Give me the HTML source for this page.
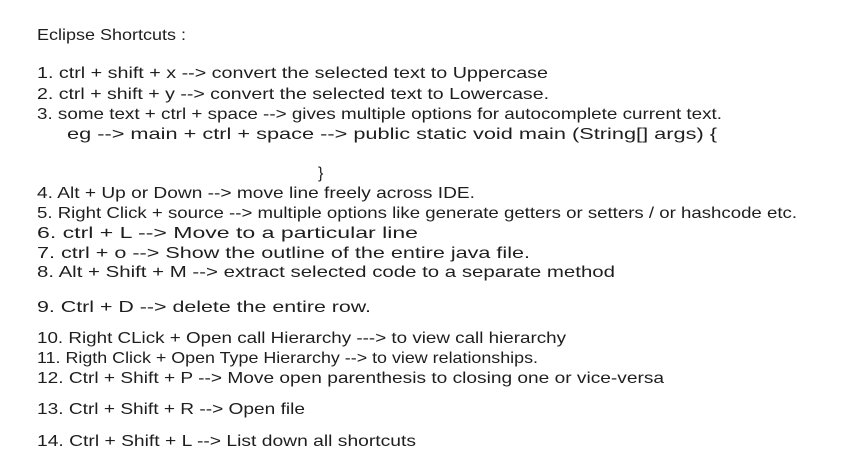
<!DOCTYPE html>
<html><head><meta charset="utf-8"><style>
html,body{margin:0;padding:0;background:#fff;width:867px;height:466px;overflow:hidden}
svg text{font-family:"Liberation Sans",sans-serif;font-size:16px;fill:#1e1e1e}
</style></head><body>
<svg width="867" height="466" xmlns="http://www.w3.org/2000/svg">
<text x="37" y="40" textLength="149" lengthAdjust="spacingAndGlyphs">Eclipse Shortcuts :</text>
<text x="37" y="78" textLength="511" lengthAdjust="spacingAndGlyphs">1. ctrl + shift + x  --&gt; convert the selected text to Uppercase</text>
<text x="37" y="99" textLength="512" lengthAdjust="spacingAndGlyphs">2. ctrl + shift + y --&gt; convert the selected text to Lowercase.</text>
<text x="37" y="119" textLength="685" lengthAdjust="spacingAndGlyphs">3. some text + ctrl + space --&gt; gives multiple options for autocomplete current text.</text>
<text x="67" y="139" textLength="650" lengthAdjust="spacingAndGlyphs">eg --&gt; main + ctrl + space --&gt; public static void main (String[] args) {</text>
<text x="318" y="178">}</text>
<text x="37" y="198" textLength="438" lengthAdjust="spacingAndGlyphs">4. Alt + Up or Down --&gt; move line freely across IDE.</text>
<text x="37" y="218" textLength="760" lengthAdjust="spacingAndGlyphs">5. Right Click + source --&gt; multiple options like generate getters or setters / or hashcode etc.</text>
<text x="37" y="238" textLength="381" lengthAdjust="spacingAndGlyphs">6. ctrl + L --&gt; Move to a particular line</text>
<text x="37" y="258" textLength="493" lengthAdjust="spacingAndGlyphs">7. ctrl + o --&gt; Show the outline of the entire java file.</text>
<text x="37" y="277" textLength="578" lengthAdjust="spacingAndGlyphs">8. Alt + Shift + M --&gt; extract selected code to a separate method</text>
<text x="37" y="312" textLength="334" lengthAdjust="spacingAndGlyphs">9. Ctrl + D --&gt; delete the entire row.</text>
<text x="37" y="343" textLength="529" lengthAdjust="spacingAndGlyphs">10. Right CLick + Open call Hierarchy ---&gt; to view call hierarchy</text>
<text x="37" y="363" textLength="501" lengthAdjust="spacingAndGlyphs">11. Rigth Click + Open Type Hierarchy --&gt; to view relationships.</text>
<text x="37" y="383" textLength="627" lengthAdjust="spacingAndGlyphs">12. Ctrl + Shift + P --&gt; Move open parenthesis to closing one or vice-versa</text>
<text x="37" y="414" textLength="268" lengthAdjust="spacingAndGlyphs">13. Ctrl + Shift + R --&gt; Open file</text>
<text x="37" y="446" textLength="379" lengthAdjust="spacingAndGlyphs">14. Ctrl + Shift + L --&gt; List down all shortcuts</text>
</svg>
</body></html>
